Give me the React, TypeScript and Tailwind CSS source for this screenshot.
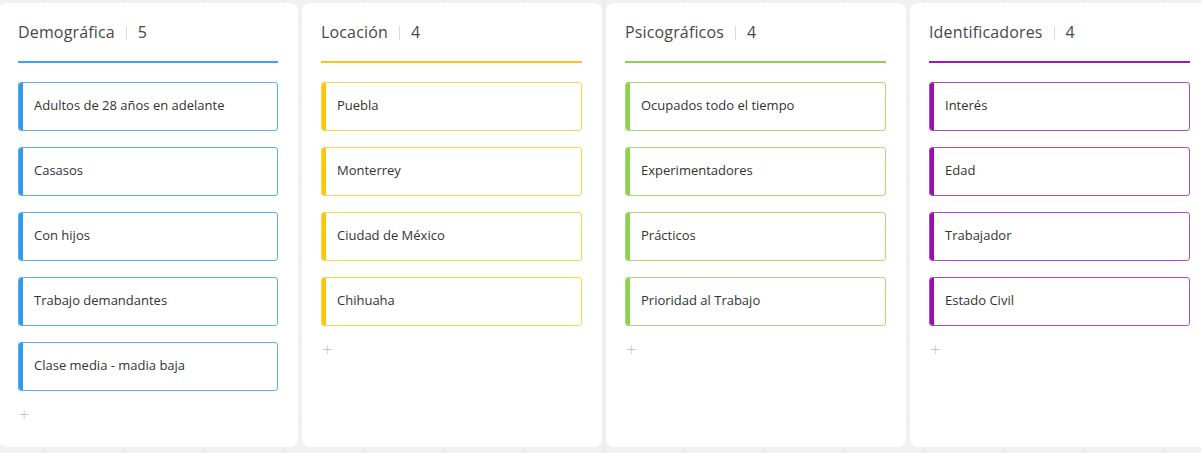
import React from "react";

type Column = {
  title: string;
  bar: string;
  border: string;
  line: string;
  items: string[];
};

const COLUMNS: Column[] = [
  {
    title: "Demográfica",
    bar: "bg-[#2d9bf0]",
    border: "border-[#5aaff2]",
    line: "bg-[#3fa2f1]",
    items: [
      "Adultos de 28 años en adelante",
      "Casasos",
      "Con hijos",
      "Trabajo demandantes",
      "Clase media - madia baja",
    ],
  },
  {
    title: "Locación",
    bar: "bg-[#fac710]",
    border: "border-[#fbd64a]",
    line: "bg-[#fac710]",
    items: ["Puebla", "Monterrey", "Ciudad de México", "Chihuaha"],
  },
  {
    title: "Psicográficos",
    bar: "bg-[#8fd14f]",
    border: "border-[#a9dc78]",
    line: "bg-[#8fd14f]",
    items: ["Ocupados todo el tiempo", "Experimentadores", "Prácticos", "Prioridad al Trabajo"],
  },
  {
    title: "Identificadores",
    bar: "bg-[#9510ac]",
    border: "border-[#ad4cbf]",
    line: "bg-[#9a1cb0]",
    items: ["Interés", "Edad", "Trabajador", "Estado Civil"],
  },
];

function Card({ text, col }: { text: string; col: Column }) {
  return (
    <div className={`flex h-[49px] overflow-hidden rounded-[3px] border bg-white ${col.border}`}>
      <div className={`w-[4px] shrink-0 ${col.bar}`} />
      <div className="flex items-center pb-[1px] pl-[11px] text-[13px] text-[#333]">{text}</div>
    </div>
  );
}

function BoardColumn({ col, first }: { col: Column; first: boolean }) {
  return (
    <div
      className={`flex h-[444px] shrink-0 flex-col rounded-[8px] bg-white pl-[19px] pr-[20px] ${
        first ? "w-[299px]" : "w-[300px]"
      }`}
    >
      <div className="flex h-[58px] items-end pb-[17px] text-[16px] tracking-[0.15px] text-[#484848]">
        <span>{col.title}</span>
        <span className="mx-[11px] mb-[4px] h-[14px] w-px bg-[#dcdcdc]" />
        <span>{col.items.length}</span>
      </div>
      <div className={`h-[2px] ${col.line}`} />
      <div className="mt-[19px] flex flex-col gap-[16px]">
        {col.items.map((t) => (
          <Card key={t} text={t} col={col} />
        ))}
      </div>
      <div className="mt-[14px] pl-[1px] text-[18px] font-light leading-none text-[#c4c4c4]">+</div>
    </div>
  );
}

export default function App() {
  return (
    <div
      className="h-[453px] w-[1201px] overflow-hidden bg-[#f1f1f1] bg-[linear-gradient(to_right,#e6e6e6_1px,transparent_1px),linear-gradient(to_bottom,#e6e6e6_1px,transparent_1px)] bg-[length:80px_80px] bg-[position:43px_20px]"
      style={{ fontFamily: '"Open Sans", "Noto Sans", sans-serif' }}
    >
      <div className="ml-[-1px] mt-[3px] flex gap-[4px]">
        {COLUMNS.map((c, i) => (
          <BoardColumn key={c.title} col={c} first={i === 0} />
        ))}
      </div>
    </div>
  );
}
